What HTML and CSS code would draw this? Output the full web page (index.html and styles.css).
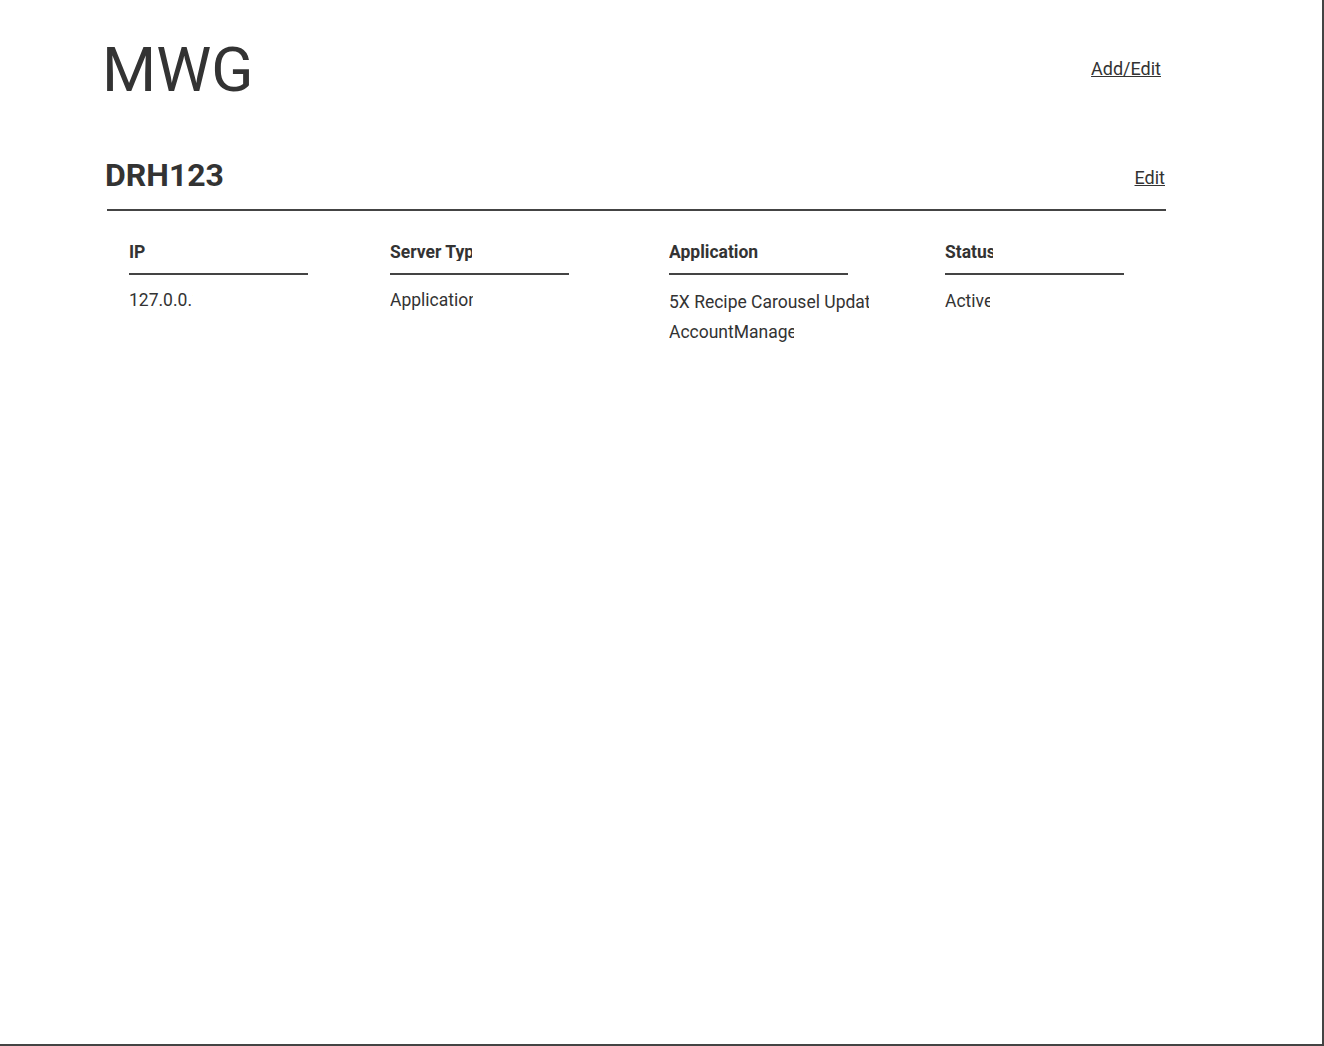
FILE: index.html
```html
<!DOCTYPE html>
<html lang="en">
<head>
<meta charset="utf-8">
<title>MWG</title>
<link rel="stylesheet" href="styles.css">
</head>
<body>
<div class="frame">
  <div class="container">
    <header class="topbar">
      <h1 class="brand">MWG</h1>
      <a class="link link-add" href="#">Add/Edit</a>
    </header>

    <section class="server">
      <div class="server-head">
        <h2 class="server-name">DRH123</h2>
        <a class="link link-edit" href="#">Edit</a>
      </div>
      <div class="grid">
        <div class="col col-ip">
          <div class="th"><span class="clip" style="width:40px">IP</span></div>
          <div class="td"><span class="clip" style="width:64px">127.0.0.1</span></div>
        </div>
        <div class="col col-type">
          <div class="th"><span class="clip" style="width:82px">Server Type</span></div>
          <div class="td"><span class="clip" style="width:83px">Application</span></div>
        </div>
        <div class="col col-app">
          <div class="th"><span class="clip" style="width:120px">Application</span></div>
          <div class="td td-app">
            <span class="clip" style="width:200px">5X Recipe Carousel Update</span>
            <span class="clip" style="width:125px">AccountManager</span>
          </div>
        </div>
        <div class="col col-status">
          <div class="th"><span class="clip" style="width:48px">Status</span></div>
          <div class="td td-status"><span class="clip" style="width:45px">Active</span></div>
        </div>
      </div>
    </section>
  </div>
</div>
</body>
</html>
```

FILE: styles.css
```css
* { box-sizing: border-box; }

html, body {
  margin: 0;
  padding: 0;
  background: #fff;
}

body {
  font-family: Roboto, "Liberation Sans", Arial, sans-serif;
  color: #333;
}

.frame {
  width: 1324px;
  height: 1046px;
  border-right: 2px solid #444;
  border-bottom: 2px solid #444;
  overflow: hidden;
}

.container {
  margin-left: 107px;
  width: 1059px;
}

.topbar {
  display: flex;
  justify-content: space-between;
  align-items: center;
  padding-top: 39px;
  padding-right: 5px;
}

.brand {
  margin: 0 0 0 -5px;
  font-size: 62px;
  font-weight: 400;
  line-height: 62px;
}

.link {
  color: #333;
  text-decoration: underline;
  font-size: 18px;
  line-height: 1;
}

.link-add {
  margin-top: -3px;
}

.server-head {
  display: flex;
  justify-content: space-between;
  align-items: center;
  margin-top: 58px;
  padding-bottom: 18px;
  border-bottom: 2px solid #444;
}

.server-name {
  margin: 0 0 0 -2px;
  font-size: 32px;
  font-weight: 700;
  line-height: 32px;
}

.link-edit {
  margin-top: 5px;
  margin-right: 1px;
}

.grid {
  display: grid;
  grid-template-columns: 261px 279px 276px 179px;
  padding-left: 22px;
  padding-top: 33px;
}

.th {
  width: 179px;
  font-size: 17.5px;
  font-weight: 700;
  line-height: 17px;
  padding-bottom: 12px;
  border-bottom: 2px solid #444;
}

.td {
  font-size: 17.5px;
  line-height: 30px;
  padding-top: 10px;
  display: flex;
  flex-direction: column;
}

.td-app { padding-top: 12px; }
.td-status { padding-top: 11px; }

.clip {
  display: block;
  overflow: hidden;
  white-space: nowrap;
}
```
